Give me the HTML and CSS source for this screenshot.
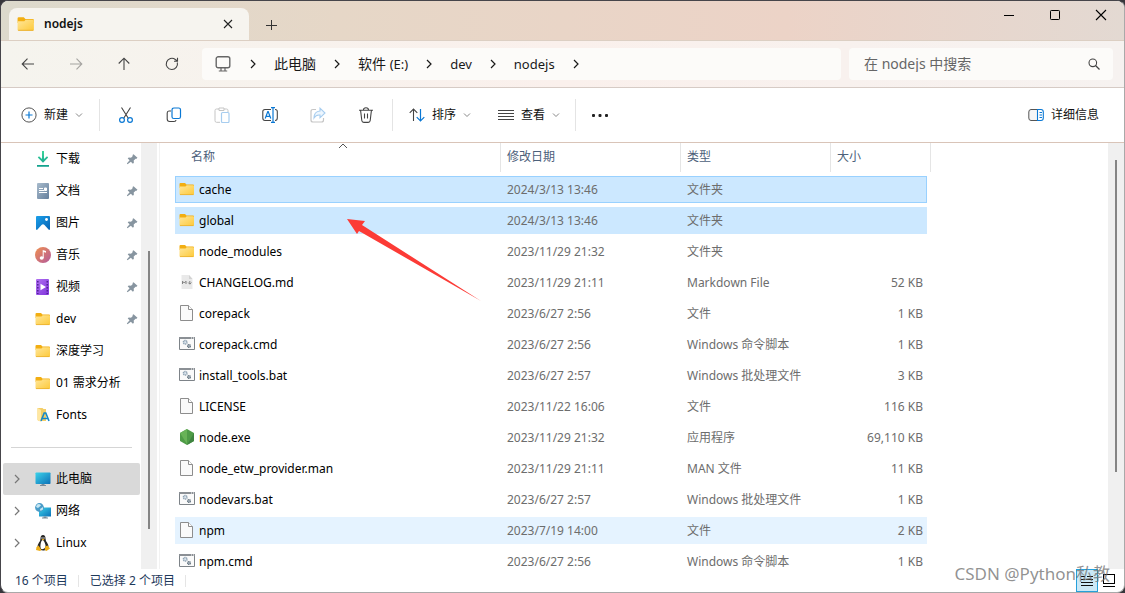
FILE: index.html
```html
<!DOCTYPE html>
<html lang="zh-CN">
<head>
<meta charset="utf-8">
<title>nodejs</title>
<link rel="stylesheet" href="styles.css">
</head>
<body>
<svg class="defs" aria-hidden="true">
  <defs>
    <linearGradient id="gold" x1="0" y1="0" x2="1" y2="1"><stop offset="0" stop-color="#ffe69a"/><stop offset="1" stop-color="#fdc939"/></linearGradient>
    <linearGradient id="slate" x1="0" y1="0" x2="1" y2="1"><stop offset="0" stop-color="#a9bccd"/><stop offset="1" stop-color="#647f9c"/></linearGradient>
    <linearGradient id="sky" x1="0" y1="0" x2="1" y2="1"><stop offset="0" stop-color="#1ba0ea"/><stop offset="1" stop-color="#0663b4"/></linearGradient>
    <linearGradient id="sunset" x1="0" y1="0" x2="1" y2="1"><stop offset="0" stop-color="#f0914f"/><stop offset="1" stop-color="#b3599c"/></linearGradient>
    <linearGradient id="violet" x1="0" y1="0" x2="1" y2="1"><stop offset="0" stop-color="#b070f0"/><stop offset="1" stop-color="#8034dc"/></linearGradient>
    <linearGradient id="screen" x1="0" y1="0" x2="1" y2="1"><stop offset="0" stop-color="#3bd3ea"/><stop offset="1" stop-color="#0c70b8"/></linearGradient>
    <linearGradient id="mint" x1="0" y1="0" x2="0" y2="1"><stop offset="0" stop-color="#3dd69c"/><stop offset="1" stop-color="#0f9f8c"/></linearGradient>
  </defs>
  <symbol id="folder" viewBox="0 0 16 16"><path d="M.5 3q0-1 1-1H6l1.500 1.500H14q1 0 1 1V7H.5z" fill="#f2ae12"/><path d="M.5 5.500h6L7.700 4.300H14q1 0 1 1V13q0 1-1 1H1.500q-1 0-1-1z" fill="url(#gold)"/><path d="M1 13.600h13.500" stroke="#e9ad2c" stroke-width=".8"/></symbol>
  <symbol id="chev" viewBox="0 0 8 12"><path d="M2 2l4 4-4 4" fill="none" stroke="currentColor" stroke-width="1.2"/></symbol>
  <symbol id="down" viewBox="0 0 8 8"><path d="M1 2.500l3 3 3-3" fill="none" stroke="currentColor"/></symbol>
  <symbol id="pin" viewBox="0 0 16 16"><path d="M10 1.500l5.300 4.800-1.200 1.400-1.300-.2-2.500 2.600.2 2.900-1.300 1.200-2.700-2.700L2 15l-.9-.9 3.700-4.400-2.500-2.400 1.300-1.300 3.100.3 2.300-2.400-.3-1.200z" fill="#8795a0"/></symbol>
  <symbol id="file" viewBox="0 0 16 16"><path d="M1.500.5h8l4 4v11h-12z" fill="#fafafa" stroke="#8d8d8d"/><path d="M9.500.5v4h4" fill="#fff" stroke="#8d8d8d"/></symbol>
  <symbol id="script" viewBox="0 0 16 16"><path d="M.5 1.500h15v12H.5z" fill="#fafafa" stroke="#7d8388"/><path d="M0 2h16" stroke="#8b9095" stroke-width="2"/><path d="M12 2h1m1 0h1" stroke="#fff"/><circle cx="6.200" cy="6.300" r="1.800" fill="#dce6ee" stroke="#8fa3b3" stroke-dasharray="1.200 .5" stroke-width="1.500"/><circle cx="10" cy="10" r="1.400" fill="#b8c3cc" stroke="#687783" stroke-dasharray="1.200 .4" stroke-width="1.300"/></symbol>
  <symbol id="screen-icon" viewBox="0 0 16 16"><rect x=".5" y="1.500" width="15" height="11.500" rx=".7" fill="url(#screen)"/><path d="M6.500 13h3v1h-3zM5 14h6v1H5z" fill="#788a99"/></symbol>
</svg>

<div class="window">
  <header class="titlebar">
    <div class="tab">
      <svg class="i18"><use href="#folder"/></svg>
      <span class="tab-title">nodejs</span>
      <button class="plain" aria-label="关闭标签页"><svg class="i12" viewBox="0 0 12 12"><path d="M2 2l8 8M10 2l-8 8" stroke="#222" stroke-width="1.100"/></svg></button>
    </div>
    <button class="plain new-tab" aria-label="新建标签页"><svg class="i12" viewBox="0 0 12 12"><path d="M6.500 1v10M1 6.500h11" stroke="#333"/></svg></button>
    <div class="controls">
      <button class="plain" aria-label="最小化"><svg class="i12" viewBox="0 0 12 12"><path d="M1 6.500h10" stroke="#000"/></svg></button>
      <button class="plain" aria-label="最大化"><svg class="i12" viewBox="0 0 12 12"><rect x="1.500" y="1.500" width="9" height="9" rx=".8" fill="none" stroke="#000"/></svg></button>
      <button class="plain" aria-label="关闭"><svg class="i12" viewBox="0 0 12 12"><path d="M1 1l10 10M11 1L1 11" stroke="#000" stroke-width="1.100"/></svg></button>
    </div>
  </header>

  <nav class="navbar" aria-label="地址">
    <div class="history">
      <button class="plain" aria-label="后退"><svg class="i16" viewBox="0 0 16 16"><path d="M14 8H2.500M7.500 2.700L2.200 8l5.300 5.300" class="ln"/></svg></button>
      <button class="plain faded" aria-label="前进"><svg class="i16" viewBox="0 0 16 16"><path d="M2 8h11.500M8.500 2.700L13.800 8l-5.300 5.300" class="ln"/></svg></button>
      <button class="plain" aria-label="向上"><svg class="i16" viewBox="0 0 16 16"><path d="M8 14V2.500M2.700 7.500L8 2.200l5.300 5.300" class="ln"/></svg></button>
      <button class="plain" aria-label="刷新"><svg class="i16" viewBox="0 0 16 16"><path d="M13.300 6.500a5.600 5.600 0 1 1-2-3l2 1.500M13.500 1.800V5.300H10" class="ln"/></svg></button>
    </div>
    <div class="crumbs">
      <svg class="i16 grey" viewBox="0 0 16 16"><rect x="1.200" y=".8" width="13.600" height="11" rx="2" fill="none" stroke="currentColor" stroke-width="1.400"/><path d="M6 12v2.500M10 12v2.500M3.800 15h8.400" stroke="currentColor" stroke-width="1.200"/></svg>
      <svg class="chev"><use href="#chev"/></svg>
      <a href="#">此电脑</a>
      <svg class="chev"><use href="#chev"/></svg>
      <a href="#">软件 <span class="latin">(E:)</span></a>
      <svg class="chev"><use href="#chev"/></svg>
      <a href="#" class="latin">dev</a>
      <svg class="chev"><use href="#chev"/></svg>
      <a href="#" class="latin">nodejs</a>
      <svg class="chev"><use href="#chev"/></svg>
    </div>
    <div class="search">
      <input type="text" aria-label="搜索" placeholder="在 nodejs 中搜索">
      <svg class="i12" viewBox="0 0 12 12"><circle cx="4.800" cy="4.800" r="3.800" fill="none" stroke="#444" stroke-width="1.100"/><path d="M7.500 7.500l4 4" stroke="#444" stroke-width="1.200"/></svg>
    </div>
  </nav>

  <div class="toolbar">
    <button class="tool new"><svg class="i16" viewBox="0 0 16 16"><circle cx="8" cy="8" r="7.100" fill="none" stroke="#555"/><path d="M8 4.500v7M4.500 8h7" stroke="#0a78d4" stroke-width="1.200"/></svg>新建<svg class="down"><use href="#down"/></svg></button>
    <span class="sep"></span>
    <div class="icons">
      <button class="plain" aria-label="剪切"><svg class="i16" viewBox="0 0 16 16"><path d="M3.500.5l6.800 10.800M12.500.5L5.700 11.300" class="ln"/><g fill="none" stroke="#0a78d4" stroke-width="1.200"><circle cx="4" cy="13" r="2.400"/><circle cx="12" cy="13" r="2.400"/></g></svg></button>
      <button class="plain" aria-label="复制"><svg class="i16" viewBox="0 0 16 16"><path d="M5 4H3Q1.200 4 1.200 6v6q0 2.500 2.500 2.500H8q2 0 2-1.500" class="ln"/><rect x="6" y="1" width="8.500" height="10.500" rx="1.800" fill="#fff" stroke="#0a78d4" stroke-width="1.200"/></svg></button>
      <button class="plain" aria-label="粘贴"><svg class="i16" viewBox="0 0 16 16"><path d="M5 2H2.500Q1 2 1 3.500v10Q1 15.300 2.500 15.300H6M10 2h2.500Q14 2 14 3.500V5M5 1h5v2.500H5z" fill="none" stroke="#c5c5c5"/><rect x="7.500" y="5.500" width="7.500" height="10" rx="1" fill="#fff" stroke="#a7cdef" stroke-width="1.200"/></svg></button>
      <button class="plain" aria-label="重命名"><svg class="i16" viewBox="0 0 16 16"><path d="M9 2.500H3Q.8 2.500.8 4.500v6.500q0 2.500 2.200 2.500H9M13 2.500q2.300 0 2.300 2v6.500q0 2.500-2.300 2.500" class="ln"/><path d="M3.200 11.500l2.600-7h.4l2.600 7M4 9.300h4M11 1v14M9 .7h4M9 15.300h4" fill="none" stroke="#0a78d4" stroke-width="1.200"/></svg></button>
      <button class="plain" aria-label="共享"><svg class="i16" viewBox="0 0 16 16"><path d="M6 2.500H3Q1 2.500 1 4.500v8.500q0 2 2 2h8.500q2 0 2-2V11" fill="none" stroke="#c5c5c5" stroke-width="1.200"/><path d="M10 1.200L15 6l-5 4.800V8Q6 7.500 4 11q0-6.500 6-7z" fill="#edf6fe" stroke="#a7cdef" stroke-width="1.100"/></svg></button>
      <button class="plain" aria-label="删除"><svg class="i16" viewBox="0 0 16 16"><path d="M1 3.200h14M5.500 3Q5.500.8 8 .8T10.500 3M2.600 3.500l1.200 10q.2 1.900 2 1.900h4.400q1.800 0 2-1.900l1.200-10M6.500 6.500v5M9.500 6.500v5" class="ln"/></svg></button>
    </div>
    <span class="sep"></span>
    <button class="tool"><svg class="i16" viewBox="0 0 16 16"><path d="M4.500 14V2M.7 5.800L4.500 2l3.800 3.800" class="ln"/><path d="M11.500 2v12M7.700 10.200l3.800 3.800 3.800-3.800" fill="none" stroke="#0a78d4" stroke-width="1.200"/></svg>排序<svg class="down"><use href="#down"/></svg></button>
    <button class="tool view"><svg class="i16" viewBox="0 0 16 16"><path d="M0 3.500h16M0 6.500h16M0 9.500h16M0 12.500h16" stroke="#444"/></svg>查看<svg class="down"><use href="#down"/></svg></button>
    <span class="sep"></span>
    <button class="plain more" aria-label="更多"><svg class="i16" viewBox="0 0 16 16"><g fill="#222"><rect y="7" width="3" height="3" rx="1"/><rect x="6.500" y="7" width="3" height="3" rx="1"/><rect x="13" y="7" width="3" height="3" rx="1"/></g></svg></button>
    <button class="tool details"><svg class="i16" viewBox="0 0 16 16"><path d="M10 2.500H3Q.8 2.500.8 5v6q0 2.500 2.200 2.500h7" fill="#f6f6f6" stroke="#555"/><path d="M9.500 2.500H13q2.300 0 2.300 2.500v6q0 2.500-2.300 2.500H9.500zM11.500 5.500h2.500M11.500 8h2.500M11.500 10.500h2.500" fill="none" stroke="#0a78d4" stroke-width="1.100"/></svg>详细信息</button>
  </div>

  <div class="content">
    <aside class="sidebar">
      <a href="#" class="item"><svg class="i16" viewBox="0 0 16 16"><path d="M7 0h2v8l3-2.800 1.200 1.200L8 11.800 2.800 6.400 4 5.200 7 8zM2 14h12v1.800H2z" fill="url(#mint)"/></svg><span>下载</span><svg class="pin"><use href="#pin"/></svg></a>
      <a href="#" class="item"><svg class="i16" viewBox="0 0 16 16"><rect x="2" width="12" height="16" rx="1" fill="url(#slate)"/><path d="M4 5.500h4M4 9.500h8" stroke="#fff"/><path d="M4 7.500h5M9.500 5h2v2.500h-2z" stroke="#fff" fill="#fff"/></svg><span>文档</span><svg class="pin"><use href="#pin"/></svg></a>
      <a href="#" class="item"><svg class="i16" viewBox="0 0 16 16"><rect x="1" y="1" width="14" height="14" rx="1" fill="url(#sky)"/><path d="M2 15l4.500-5q1.500-1.600 3 0L14 15z" fill="#fff"/><circle cx="11.500" cy="4.500" r="1.400" fill="#fff"/></svg><span>图片</span><svg class="pin"><use href="#pin"/></svg></a>
      <a href="#" class="item"><svg class="i16" viewBox="0 0 16 16"><circle cx="8" cy="8" r="8" fill="url(#sunset)"/><ellipse cx="6.700" cy="11" rx="2" ry="1.700" fill="#fff"/><path d="M7.700 11V3l3.300 1v1.800L8.700 5v6z" fill="#fff"/></svg><span>音乐</span><svg class="pin"><use href="#pin"/></svg></a>
      <a href="#" class="item"><svg class="i16" viewBox="0 0 16 16"><rect x="1" width="13" height="16" rx="1" fill="url(#violet)"/><path d="M2.800 2v13M12.300 2v13" stroke="#4f2190" stroke-width="1.500" stroke-dasharray="1.500 1.500"/><path d="M5.500 4.700L11 8l-5.500 3.300z" fill="#fff"/></svg><span>视频</span><svg class="pin"><use href="#pin"/></svg></a>
      <a href="#" class="item"><svg class="i16"><use href="#folder"/></svg><span>dev</span><svg class="pin"><use href="#pin"/></svg></a>
      <a href="#" class="item"><svg class="i16"><use href="#folder"/></svg><span>深度学习</span></a>
      <a href="#" class="item"><svg class="i16"><use href="#folder"/></svg><span>01 需求分析</span></a>
      <a href="#" class="item"><svg class="i16" viewBox="0 0 16 16"><path d="M2.500 1h5l1 1H11v12H4l-1.500-1z" fill="#f3ce68"/><path d="M2.500 1L6 3v12l-3.500-2z" fill="#ffe7a2"/><path d="M6 14l3.200-8h1.600l3.200 8M7.500 11.500h5" fill="none" stroke="#1688c9" stroke-width="1.600"/></svg><span>Fonts</span></a>
      <hr>
      <a href="#" class="item root current"><svg class="chev"><use href="#chev"/></svg><svg class="i16"><use href="#screen-icon"/></svg><span>此电脑</span></a>
      <a href="#" class="item root"><svg class="chev"><use href="#chev"/></svg><svg class="i16" viewBox="0 0 16 16"><rect x="4" y="4.500" width="12" height="9" fill="url(#screen)"/><path d="M8.500 13.500h3v1h1.500v1H7v-1h1.500z" fill="#788a99"/><circle cx="4.500" cy="4.500" r="4.400" fill="#4a9cc8"/><path d="M2 1.500q3-1.500 4 1L3 5 1 4zM5 6l3-2v2.500L5.500 8z" fill="#c5e6f3"/></svg><span>网络</span></a>
      <a href="#" class="item root"><svg class="chev"><use href="#chev"/></svg><svg class="i16" viewBox="0 0 16 16"><path d="M5.500 3.500Q5.500 0 8 0t2.500 3.500q0 2 1.500 4t1.500 5Q11 16 8 15.500T2.500 12.500q0-3 1.500-5t1.500-4z" fill="#252525"/><path d="M8 5q2 2 2.500 5T8 14t-2.500-4T8 5z" fill="#fff"/><circle cx="7" cy="3" r=".7" fill="#fff"/><circle cx="9" cy="3" r=".7" fill="#fff"/><path d="M6.500 4.200L8 3.700l1.500.5L8 5.500zM3.500 10.500l3 4.500-1.500 1-4-1 .5-3zM12.500 10.500l2.500 3-3.500 2.500-1.800-1 .6-3.800z" fill="#edae19"/></svg><span>Linux</span></a>
    </aside>
    <div class="side-scroll"><span></span></div>
    <main class="files">
      <table>
        <colgroup><col class="c-name"><col class="c-date"><col class="c-type"><col class="c-size"><col class="c-end"></colgroup>
        <thead><tr><th>名称<svg class="sort" viewBox="0 0 10 6"><path d="M1 5l4-4 4 4" fill="none" stroke="#555"/></svg></th><th>修改日期</th><th>类型</th><th>大小</th><td></td></tr></thead>
        <tbody>
          <tr class="selected focus"><td><svg class="i16"><use href="#folder"/></svg>cache</td><td>2024/3/13 13:46</td><td>文件夹</td><td></td></tr>
          <tr class="selected"><td><svg class="i16"><use href="#folder"/></svg>global</td><td>2024/3/13 13:46</td><td>文件夹</td><td></td></tr>
          <tr><td><svg class="i16"><use href="#folder"/></svg>node_modules</td><td>2023/11/29 21:32</td><td>文件夹</td><td></td></tr>
          <tr><td><svg class="i16" viewBox="0 0 16 16"><path d="M2.500 1H10l3.500 4v10h-11z" fill="#e9e9e9"/><path d="M10 1v4h3.500z" fill="#d2d2d2"/><path d="M3.500 10V7.200L5.200 9 7 7.200V10M10.800 7v3M9.200 8.500l1.600 1.700 1.600-1.700" fill="none" stroke="#777" stroke-width=".9"/></svg>CHANGELOG.md</td><td>2023/11/29 21:11</td><td>Markdown File</td><td>52 KB</td></tr>
          <tr><td><svg class="i16"><use href="#file"/></svg>corepack</td><td>2023/6/27 2:56</td><td>文件</td><td>1 KB</td></tr>
          <tr><td><svg class="i16"><use href="#script"/></svg>corepack.cmd</td><td>2023/6/27 2:56</td><td>Windows 命令脚本</td><td>1 KB</td></tr>
          <tr><td><svg class="i16"><use href="#script"/></svg>install_tools.bat</td><td>2023/6/27 2:57</td><td>Windows 批处理文件</td><td>3 KB</td></tr>
          <tr><td><svg class="i16"><use href="#file"/></svg>LICENSE</td><td>2023/11/22 16:06</td><td>文件</td><td>116 KB</td></tr>
          <tr><td><svg class="i16" viewBox="0 0 16 16"><path d="M8 0l7 4v8l-7 4-7-4V4z" fill="#4f9c47"/><path d="M1 4l7 11V0z" fill="#68b357"/><path d="M8 16l7-12v8z" fill="#3f8440"/></svg>node.exe</td><td>2023/11/29 21:32</td><td>应用程序</td><td>69,110 KB</td></tr>
          <tr><td><svg class="i16"><use href="#file"/></svg>node_etw_provider.man</td><td>2023/11/29 21:11</td><td>MAN 文件</td><td>11 KB</td></tr>
          <tr><td><svg class="i16"><use href="#script"/></svg>nodevars.bat</td><td>2023/6/27 2:57</td><td>Windows 批处理文件</td><td>1 KB</td></tr>
          <tr class="hover"><td><svg class="i16"><use href="#file"/></svg>npm</td><td>2023/7/19 14:00</td><td>文件</td><td>2 KB</td></tr>
          <tr><td><svg class="i16"><use href="#script"/></svg>npm.cmd</td><td>2023/6/27 2:56</td><td>Windows 命令脚本</td><td>1 KB</td></tr>
        </tbody>
      </table>
    </main>
    <div class="main-scroll"><span></span></div>
  </div>

  <footer class="status">
    <span>16 个项目</span><i></i><span>已选择 2 个项目</span><i></i>
    <div class="modes">
      <button class="plain active" aria-label="详细信息视图"><svg class="i16" viewBox="0 0 16 16"><path d="M2 3.500h4M8 3.500h6M2 6.500h4M7 6.500h7M2 9.500h12M2 12.500h12" stroke="#111"/></svg></button>
      <button class="plain" aria-label="大图标视图"><svg class="i16" viewBox="0 0 16 16"><rect x="2.500" y="1.500" width="11" height="9" fill="#fff" stroke="#000"/><path d="M2 13.500h12" stroke="#000"/></svg></button>
    </div>
  </footer>
</div>

<svg class="arrow" viewBox="0 0 134 82" aria-hidden="true"><path d="M0 0l18 2-3 4 119 76L12 12l-2 3z" fill="#fc3b36"/></svg>
<div class="watermark">CSDN @Python私教</div>
</body>
</html>
```
FILE: styles.css
```css
* { box-sizing: border-box; }

body {
  margin: 0;
  background: #37363b;
  color: #111;
  font: 12px/16px "Noto Sans", "Noto Sans CJK SC", sans-serif;
}

a { color: inherit; text-decoration: none; }
svg { display: block; flex: none; }
button { font: inherit; color: inherit; }

.defs { position: absolute; width: 0; height: 0; }
.i12 { width: 12px; height: 12px; }
.i16 { width: 16px; height: 16px; }
.i18 { width: 18px; height: 18px; }
.chev { width: 8px; height: 12px; }
.down { width: 8px; height: 8px; color: #888; }
.grey { color: #666; }
.ln { fill: none; stroke: #444; stroke-width: 1.1; }
.plain {
  display: flex;
  align-items: center;
  justify-content: center;
  padding: 0;
  border: 0;
  background: none;
}

.window {
  display: flex;
  flex-direction: column;
  height: 100vh;
  border: 1px solid #46454a;
  border-right-color: #a9a9a9;
  border-bottom-color: #a9a9a9;
  border-radius: 8px;
  overflow: hidden;
  background: #fff;
}

/* Title bar */
.titlebar {
  display: flex;
  height: 40px;
  flex: none;
  border-bottom: 1px solid #dccfc3;
  background: linear-gradient(90deg, #dcd9cc, #e6d7c7 30%, #ecd3c7 70%, #e3d9d2);
}
.tab {
  display: flex;
  align-items: center;
  width: 240px;
  margin: 7px 0 0 8px;
  padding: 0 15px 0 8px;
  border-radius: 8px 8px 0 0;
  background: #f6f4ef;
}
.tab-title { flex: 1; margin-left: 9px; font-weight: 600; }
.new-tab { width: 44px; padding-top: 8px; }
.controls { display: flex; height: 28px; margin-left: auto; }
.controls .plain { width: 46px; }

/* Address bar */
.navbar {
  display: flex;
  align-items: center;
  height: 47px;
  flex: none;
  padding-right: 11px;
  border-bottom: 1px solid #d6cbc5;
  background: linear-gradient(90deg, #f5f4ee, #faf0ec 50%, #f6f2f0);
}
.history { display: flex; width: 201px; padding-left: 3px; }
.history .plain { width: 48px; height: 32px; }
.faded { opacity: .45; }
.crumbs, .search {
  display: flex;
  align-items: center;
  height: 32px;
  border-radius: 4px;
  background: #fcfbf9;
}
.crumbs { flex: 1; gap: 17px; padding-left: 13px; font-size: 14px; color: #191919; }
.crumbs .grey { margin-right: 1px; }
.latin { font-size: 13px; }
.search { width: 264px; margin-left: 8px; padding: 0 13px 0 15px; }
.search input {
  flex: 1;
  min-width: 0;
  padding: 0;
  border: 0;
  outline: 0;
  background: none;
  font: inherit;
  font-size: 14px;
}
.search input::placeholder { color: #666; opacity: 1; }

/* Command bar */
.toolbar {
  display: flex;
  align-items: center;
  height: 55px;
  flex: none;
  padding: 0 17px 0 12px;
  border-bottom: 1px solid #d9c4b8;
}
.tool {
  display: flex;
  align-items: center;
  gap: 7px;
  height: 32px;
  padding: 0 8px;
  border: 0;
  background: none;
}
.tool.new { padding-right: 16px; }
.tool.view { margin-left: 11px; padding-right: 15px; }
.sep { width: 1px; height: 32px; background: #e4e4e4; }
.sep + .tool { margin-left: 8px; }
.icons { display: flex; margin: 0 2px; }
.icons .plain { width: 48px; height: 32px; }
.more { width: 48px; height: 32px; }
.details { margin-left: auto; }

/* Panes */
.content { display: flex; flex: 1; min-height: 0; }
.sidebar { width: 140px; flex: none; overflow: hidden; color: #000; }
.item {
  display: flex;
  align-items: center;
  height: 32px;
  margin: 0 1px 0 2px;
  padding-left: 32px;
}
.item span { margin-left: 5px; white-space: nowrap; }
.item .pin { width: 12px; height: 12px; margin: 0 2px 0 auto; }
.root { padding-left: 10px; border-radius: 2px; }
.root .chev { margin-right: 14px; color: #777; }
.current { background: #d9d9d9; }
.sidebar hr {
  height: 1px;
  margin: 16px 9px 15px 10px;
  border: 0;
  background: #d5d5d5;
}
.side-scroll, .main-scroll { width: 16px; flex: none; background: #f0f0f0; }
.side-scroll span, .main-scroll span {
  display: block;
  width: 2px;
  margin: 0 auto;
  background: #858585;
}
.side-scroll { padding-top: 108px; }
.side-scroll span { height: 278px; }
.main-scroll { padding-top: 17px; }
.main-scroll span { height: 312px; }

.files {
  flex: 1;
  min-width: 0;
  margin-left: 2px;
  padding-left: 15px;
  border-left: 1px solid #f2f2f2;
  overflow: hidden;
}
.files table {
  width: 756px;
  margin-top: -4px;
  table-layout: fixed;
  border-spacing: 0 4px;
}
.c-name { width: 326px; }
.c-date { width: 180px; }
.c-type { width: 150px; }
.c-size { width: 96px; }
.c-end { width: 4px; }
.files td, .files th { padding: 0 4px 0 6px; white-space: nowrap; }
.files thead tr { height: 29px; }
.files th {
  position: relative;
  padding-bottom: 2px;
  border-right: 1px solid #e5e5e5;
  color: #4c607a;
  font-weight: 400;
  text-align: left;
}
.files th:first-child { padding-left: 16px; }
.files th:nth-child(4) { border-right: 0; }
.files thead td { border-right: 1px solid #e5e5e5; }
.sort { position: absolute; top: 0; left: 50%; width: 10px; height: 6px; }
.files tbody tr { height: 27px; color: #6d6d6d; }
.files tbody td:first-child { padding-left: 4px; color: #000; }
.files tbody td:nth-child(4) { text-align: right; }
.files td svg { display: inline-block; margin-right: 4px; vertical-align: -3px; }
.selected td { background: #cce8ff; }
.hover td { background: #e5f3ff; }
.focus td { border: solid #99d1ff; border-width: 1px 0; }
.files .focus td:first-child { border-left-width: 1px; padding-left: 3px; }
.focus td:last-child { border-right-width: 1px; }

/* Status bar */
.status {
  display: flex;
  align-items: center;
  height: 23px;
  flex: none;
  padding-left: 14px;
  color: #1e395b;
}
.status i { width: 1px; height: 12px; margin: 0 11px 0 10px; background: #e5e5e5; }
.modes { display: flex; margin: 0 4px 0 auto; }
.modes .plain { width: 22px; height: 23px; }
.modes .active { border: 1px solid #26a0da; background: #cbe8f6; }

/* Annotations over the window */
.arrow { position: absolute; left: 347px; top: 219px; width: 134px; height: 82px; }
.watermark {
  position: absolute;
  right: 15px;
  bottom: 7px;
  color: rgba(110, 110, 110, .75);
  font: 17px/24px "Noto Sans", "Noto Sans CJK SC", sans-serif;
}
```
